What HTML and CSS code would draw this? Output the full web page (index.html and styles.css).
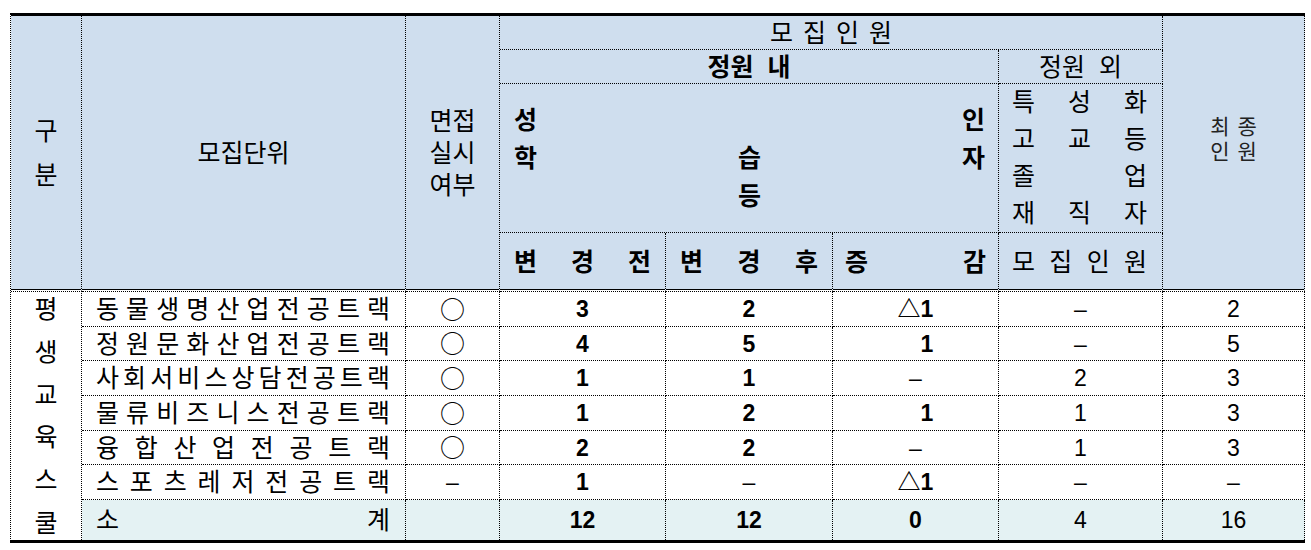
FILE: index.html
```html
<!DOCTYPE html>
<html lang="ko">
<head>
<meta charset="utf-8">
<title>모집인원</title>
<link rel="stylesheet" href="styles.css">
</head>
<body>
<table class="quota">
  <colgroup>
    <col class="w-cat"><col class="w-unit"><col class="w-int"><col class="w-before"><col class="w-after"><col class="w-diff"><col class="w-extra"><col class="w-final">
  </colgroup>
  <thead>
    <tr class="hr1">
      <th rowspan="4" class="hb"><div class="stack-wide"><span>구</span><span>분</span></div></th>
      <th rowspan="4" class="hb">모집단위</th>
      <th rowspan="4" class="hb"><div class="stack">면접<br>실시<br>여부</div></th>
      <th colspan="4"><div class="spread"><span>모</span><span>집</span><span>인</span><span>원</span></div></th>
      <th rowspan="4" class="hb final"><div class="pair"><span>최</span><span>종</span></div><div class="pair"><span>인</span><span>원</span></div></th>
    </tr>
    <tr class="hr2">
      <th colspan="3" class="b sp">정원 내</th>
      <th class="sp">정원 외</th>
    </tr>
    <tr class="hr3">
      <th colspan="3" class="b">
        <div class="grid3">
          <span class="l">성</span><span class="c"></span><span class="r">인</span>
          <span class="l">학</span><span class="c">습</span><span class="r">자</span>
          <span class="l"></span><span class="c">등</span><span class="r"></span>
        </div>
      </th>
      <th class="extra-h">
        <div class="dist"><span>특</span><span>성</span><span>화</span></div>
        <div class="dist"><span>고</span><span>교</span><span>등</span></div>
        <div class="dist"><span>졸</span><span>업</span></div>
        <div class="dist"><span>재</span><span>직</span><span>자</span></div>
      </th>
    </tr>
    <tr class="hr4">
      <th class="hb b"><div class="dist"><span>변</span><span>경</span><span>전</span></div></th>
      <th class="hb b"><div class="dist"><span>변</span><span>경</span><span>후</span></div></th>
      <th class="hb b narrow"><div class="dist"><span>증</span><span>감</span></div></th>
      <th class="hb extra-h"><div class="dist"><span>모</span><span>집</span><span>인</span><span>원</span></div></th>
    </tr>
  </thead>
  <tbody>
    <tr class="br1">
      <td rowspan="7" class="cat"><div class="vdist"><span>평</span><span>생</span><span>교</span><span>육</span><span>스</span><span>쿨</span></div></td>
      <td class="unit"><div class="dist"><span>동</span><span>물</span><span>생</span><span>명</span><span>산</span><span>업</span><span>전</span><span>공</span><span>트</span><span>랙</span></div></td>
      <td><span class="mark">○</span></td>
      <td class="b">3</td>
      <td class="b">2</td>
      <td class="b">△1</td>
      <td><span class="dash">–</span></td>
      <td>2</td>
    </tr>
    <tr class="br2">
      <td class="unit"><div class="dist"><span>정</span><span>원</span><span>문</span><span>화</span><span>산</span><span>업</span><span>전</span><span>공</span><span>트</span><span>랙</span></div></td>
      <td><span class="mark">○</span></td>
      <td class="b">4</td>
      <td class="b">5</td>
      <td class="b"><span class="ghost">△</span>1</td>
      <td><span class="dash">–</span></td>
      <td>5</td>
    </tr>
    <tr class="br3">
      <td class="unit"><div class="dist"><span>사</span><span>회</span><span>서</span><span>비</span><span>스</span><span>상</span><span>담</span><span>전</span><span>공</span><span>트</span><span>랙</span></div></td>
      <td><span class="mark">○</span></td>
      <td class="b">1</td>
      <td class="b">1</td>
      <td><span class="dash">–</span></td>
      <td>2</td>
      <td>3</td>
    </tr>
    <tr class="br4">
      <td class="unit"><div class="dist"><span>물</span><span>류</span><span>비</span><span>즈</span><span>니</span><span>스</span><span>전</span><span>공</span><span>트</span><span>랙</span></div></td>
      <td><span class="mark">○</span></td>
      <td class="b">1</td>
      <td class="b">2</td>
      <td class="b"><span class="ghost">△</span>1</td>
      <td>1</td>
      <td>3</td>
    </tr>
    <tr class="br5">
      <td class="unit"><div class="dist"><span>융</span><span>합</span><span>산</span><span>업</span><span>전</span><span>공</span><span>트</span><span>랙</span></div></td>
      <td><span class="mark">○</span></td>
      <td class="b">2</td>
      <td class="b">2</td>
      <td><span class="dash">–</span></td>
      <td>1</td>
      <td>3</td>
    </tr>
    <tr class="br6">
      <td class="unit"><div class="dist"><span>스</span><span>포</span><span>츠</span><span>레</span><span>저</span><span>전</span><span>공</span><span>트</span><span>랙</span></div></td>
      <td><span class="dash">–</span></td>
      <td class="b">1</td>
      <td><span class="dash">–</span></td>
      <td class="b">△1</td>
      <td><span class="dash">–</span></td>
      <td><span class="dash">–</span></td>
    </tr>
    <tr class="br7 sub">
      <td class="unit"><div class="dist"><span>소</span><span>계</span></div></td>
      <td></td>
      <td class="b">12</td>
      <td class="b">12</td>
      <td class="b">0</td>
      <td>4</td>
      <td>16</td>
    </tr>
  </tbody>
</table>
</body>
</html>
```

FILE: styles.css
```css
* { box-sizing: border-box; }
html, body { margin: 0; padding: 0; background: #fff; }
body {
  font-family: "Liberation Sans", "Noto Sans CJK KR", sans-serif;
  font-size: 25px;
  color: #000;
}

.quota {
  margin: 13px 0 0 10px;
  width: 1295px;
  table-layout: fixed;
  border-collapse: separate;
  border-spacing: 0;
  border-top: 3px solid #000;
  border-bottom: 3px solid #000;
  border-left: 1px dotted #000;
  border-right: 0;
}
.w-cat { width: 71px; }
.w-unit { width: 324px; }
.w-int { width: 94px; }
.w-before { width: 166px; }
.w-after { width: 167px; }
.w-diff { width: 166px; }
.w-extra { width: 164px; }
.w-final { width: 142px; }

.quota th,
.quota td {
  padding: 0;
  border-right: 1px dotted #000;
  border-bottom: 1px dotted #000;
  text-align: center;
  vertical-align: middle;
  font-weight: 400;
  line-height: 28px;
}
.quota td { font-size: 23px; }
.quota th { background: #cfdeee; }
.quota .hb {
  border-bottom: 1px solid #fff;
  box-shadow: inset 0 -1px 0 #000;
}
.quota .b { font-weight: 700; }

.hr1 { height: 34px; }
.hr2 { height: 34px; }
.hr3 { height: 149px; }
.hr4 { height: 58px; }
.br1 { height: 36px; }
.br2 { height: 34px; }
.br3 { height: 35px; }
.br4 { height: 35px; }
.br5 { height: 34px; }
.br6 { height: 35px; }
.br7 { height: 40px; }

.br1 > td { border-top: 1px dotted #000; }
.quota .sub > td { border-bottom: 0; background: #e4f2f3; }
.quota .cat {
  vertical-align: top;
  padding-top: 3px;
  border-bottom: 0;
  background: #fff;
  font-size: 25px;
}

.dist { display: flex; justify-content: space-between; }
.vdist {
  height: 242px;
  display: flex;
  flex-direction: column;
  justify-content: space-between;
  align-items: center;
}

.stack-wide {
  display: flex;
  flex-direction: column;
  align-items: center;
  gap: 20px;
  line-height: 24px;
}
.stack { line-height: 32px; }

.spread { display: flex; justify-content: center; gap: 10px; }
.sp { word-spacing: 7px; }

.grid3 {
  display: grid;
  grid-template-columns: 1fr auto 1fr;
  grid-auto-rows: 38px;
  line-height: 38px;
  padding: 0 13px 0 14px;
}
.grid3 .l { justify-self: start; }
.grid3 .c { justify-self: center; }
.grid3 .r { justify-self: end; }

.quota .extra-h { padding: 0 15px 0 13px; }
.hr3 .extra-h { line-height: 37px; }
.quota .hr4 th { padding: 0 14px; }
.quota .hr4 .narrow { padding: 0 12px; }
.quota .hr4 .extra-h { padding: 0 15px 0 13px; }

.quota .final {
  font-size: 21px;
  line-height: 25px;
  padding-bottom: 29px;
  color: #222;
}
.pair { display: flex; justify-content: center; gap: 8px; }

.quota .unit { padding: 0 15px 0 14px; font-size: 25px; }
.mark { font-family: "Noto Sans CJK KR", sans-serif; font-size: 25px; }
.dash { font-weight: 400; }
.ghost { visibility: hidden; }
```
